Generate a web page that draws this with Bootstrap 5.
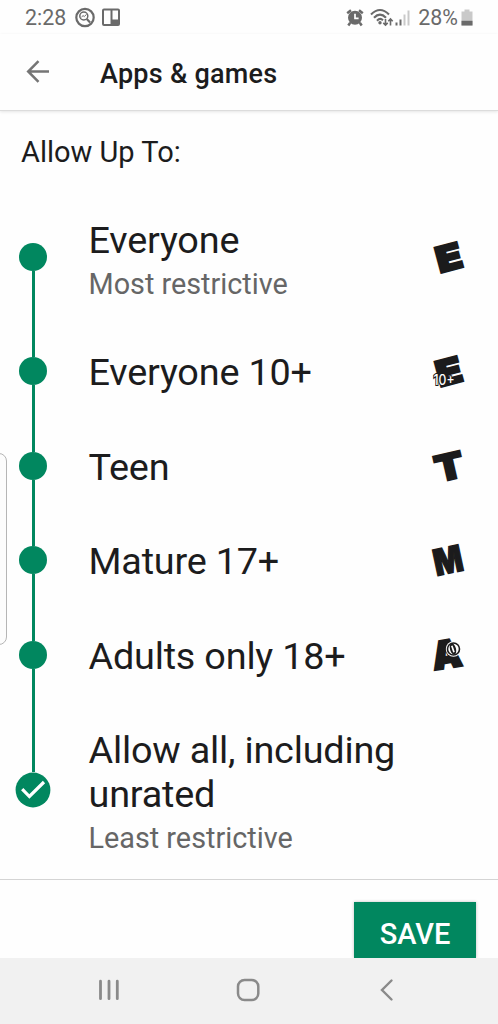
<!DOCTYPE html>
<html lang="en">
<head>
<meta charset="utf-8">
<meta name="viewport" content="width=device-width, initial-scale=1">
<title>Apps &amp; games</title>
<link href="https://cdn.jsdelivr.net/npm/bootstrap@5.3.0/dist/css/bootstrap.min.css" rel="stylesheet">
<style>
  :root { --play: #01875f; --ink: #1c1c1d; }
  body { font-family: Roboto, "Liberation Sans", sans-serif; color: var(--ink); background: #fefefe; }
  svg { display: block; flex: none; overflow: visible; }
  .screen { height: 1024px; }
  .status { height: 34px; padding: 1px 25px 0 25px; color: #6a6a6a; font-size: 21.4px; line-height: 33px; }
  .topbar { height: 77px; padding-left: 26px; border-bottom: 1px solid #dcdcdc; box-shadow: 0 1px 3px rgba(0,0,0,.10); }
  .topbar h1 { font-size: 27px; font-weight: 500; letter-spacing: .25px; line-height: 34px; margin-left: 49px; padding-top: 3px; }
  .lead-in { height: 79px; padding: 24px 0 0 21px; font-size: 29px; line-height: 34px; }
  .level { height: 94.5px; padding: 0 29px 0 15px; }
  .level.first { height: 134px; }
  .level.last { height: 176px; }
  .rail { width: 36px; flex: none; }
  .seg { width: 3px; background: var(--play); }
  .first .seg:first-child, .last .seg:last-child { background: transparent; }
  .dot { width: 28px; height: 28px; background: var(--play); }
  .label { padding: 27.4px 0 0 37.500px; font-size: 37.8px; letter-spacing: -.2px; line-height: 43.8px; }
  .first .label { padding-top: 29px; }
  .hint { font-size: 28.8px; letter-spacing: 0; line-height: 34px; margin-top: 4px; color: #666; }
  .mark-icon text { font-family: Inter, Roboto, sans-serif; font-weight: 900; fill: #1b1b1c; }
  .actions { height: 79px; border-top: 1px solid #d4d4d4; padding: 22px 22px 0 0; }
  .save { width: 122px; height: 56px; background: var(--play); color: #fff; border-radius: 0; font-size: 29px; font-weight: 500; line-height: 34px; padding: 7px 0 0; box-shadow: 0 0 3px rgba(0,0,0,.25); }
  .save:hover { background: var(--play); color: #fff; }
  .sysnav { height: 66px; background: #f1f1f1; padding: 0 104px 3px 97px; }
  .edge-handle { left: -10px; top: 453px; width: 17px; height: 192px; border: 1px solid #b5b5b5; border-radius: 8px; background: #fcfcfc; }
</style>
</head>
<body>
<div class="screen d-flex flex-column position-relative overflow-hidden">
  <div class="status d-flex align-items-center flex-shrink-0">
    <span>2:28</span>
    <svg style="margin-left:8px" width="22" height="22" viewBox="0 0 22 22" fill="none" stroke="#6a6a6a">
      <circle cx="11" cy="10.500" r="8.700" stroke-width="2.200"/><circle cx="9.800" cy="9" r="4" stroke-width="1.500"/>
      <path d="M12.800 12l3.300 3.400" stroke-width="2.200"/><path d="M7.500 10l1.600-1.400 1.200 1 2.200-2.300" stroke-width="1"/>
    </svg>
    <svg style="margin-left:5px" width="20" height="20" viewBox="0 0 20 20">
      <rect x="2" y="1.500" width="16" height="15.500" rx="1" fill="none" stroke="#6a6a6a" stroke-width="2"/>
      <path d="M10.500 2v15" stroke="#6a6a6a" stroke-width="2"/><path d="M10.500 11.500H18V17h-7.500z" fill="#6a6a6a"/>
    </svg>
    <svg class="ms-auto" width="20" height="20" viewBox="0 0 20 20" fill="none" stroke="#6a6a6a">
      <circle cx="10" cy="9.800" r="7" fill="#6a6a6a" stroke="none"/>
      <path d="M2.200 5.300L6 2.300M17.800 5.300L14 2.300M5.200 14.800L3.300 17.500M14.800 14.800l1.900 2.700" stroke-width="2.500"/>
      <path d="M10 5.700v4.700h3.600" stroke="#fff" stroke-width="1.700"/>
    </svg>
    <svg style="margin-left:5px" width="24" height="20" viewBox="0 0 24 20" fill="none" stroke="#6a6a6a" stroke-width="2.100">
      <path d="M1 6.500Q10-2.500 19 6.500M4 9.700Q10 3.500 16 9.700M7 12.700Q10 9.500 13 12.200"/><circle cx="10" cy="14.700" r="1.700" fill="#6a6a6a" stroke="none"/>
      <path d="M15.500 11v6M13.300 14.900l2.200 2.200 2.200-2.200M20.500 17.500v-6.500M18.300 13.200l2.200-2.200 2.200 2.200" stroke-width="1.600"/>
    </svg>
    <svg style="margin-left:1px" width="16" height="18" viewBox="0 0 16 18">
      <path d="M.5 13.500h2v3h-2zM4.500 10.500h2v6h-2z" fill="#6a6a6a"/><path d="M8.500 5.500h2v11h-2zM12.500 1.500h2v15h-2z" fill="#c9c9c9"/>
    </svg>
    <span style="margin-left:7px">28%</span>
    <svg style="margin-left:3px" width="12" height="18" viewBox="0 0 12 18">
      <path d="M3.500 .5h5v2H11.500v14H.5v-14h3z" fill="#c9c9c9"/><path d="M.5 11.800h11v4.700H.5z" fill="#6a6a6a"/>
    </svg>
  </div>

  <header class="topbar d-flex align-items-center flex-shrink-0">
    <svg width="25" height="24" viewBox="0 0 25 24" fill="none" stroke="#757575" stroke-width="2.500"><path d="M23 11.500H2.500M12.500 1.200L2.200 11.500l10.300 10.300"/></svg>
    <h1 class="mb-0">Apps &amp; games</h1>
  </header>

  <div class="lead-in flex-shrink-0">Allow Up To:</div>

  <main class="flex-shrink-0">
    <div class="level first d-flex">
      <div class="rail d-flex flex-column align-items-center"><i class="seg flex-fill"></i><i class="dot rounded-circle"></i><i class="seg flex-fill"></i></div>
      <div class="label flex-fill">Everyone<div class="hint">Most restrictive</div></div>
      <svg class="mark-icon align-self-center" width="40" height="40" viewBox="0 0 40 40"><text x="7" y="33" font-size="35" textLength="25.500" lengthAdjust="spacingAndGlyphs" transform="rotate(-15 20 20)" stroke="#1b1b1c" stroke-width="2.500">E</text></svg>
    </div>
    <div class="level d-flex">
      <div class="rail d-flex flex-column align-items-center"><i class="seg flex-fill"></i><i class="dot rounded-circle"></i><i class="seg flex-fill"></i></div>
      <div class="label flex-fill">Everyone 10+</div>
      <svg class="mark-icon align-self-center" width="40" height="40" viewBox="0 0 40 40"><text x="7" y="33" font-size="35" textLength="25.500" lengthAdjust="spacingAndGlyphs" transform="rotate(-15 20 20)" stroke="#1b1b1c" stroke-width="2.500">E</text>
        <text x="4.500" y="33.800" font-size="14" textLength="21" lengthAdjust="spacingAndGlyphs" style="font-weight:500;fill:#fff;stroke:#1b1b1c;stroke-width:2;paint-order:stroke">10+</text></svg>
    </div>
    <div class="level d-flex">
      <div class="rail d-flex flex-column align-items-center"><i class="seg flex-fill"></i><i class="dot rounded-circle"></i><i class="seg flex-fill"></i></div>
      <div class="label flex-fill">Teen</div>
      <svg class="mark-icon align-self-center" width="40" height="40" viewBox="0 0 40 40"><text x="5.500" y="33.500" font-size="36" textLength="29" lengthAdjust="spacingAndGlyphs" transform="rotate(-13 20 20)" stroke="#1b1b1c" stroke-width="2">T</text></svg>
    </div>
    <div class="level d-flex">
      <div class="rail d-flex flex-column align-items-center"><i class="seg flex-fill"></i><i class="dot rounded-circle"></i><i class="seg flex-fill"></i></div>
      <div class="label flex-fill">Mature 17+</div>
      <svg class="mark-icon align-self-center" width="40" height="40" viewBox="0 0 40 40"><text x="4.500" y="33" font-size="36" textLength="29" lengthAdjust="spacingAndGlyphs" transform="rotate(-12 20 20)" stroke="#1b1b1c" stroke-width="1.500">M</text></svg>
    </div>
    <div class="level d-flex">
      <div class="rail d-flex flex-column align-items-center"><i class="seg flex-fill"></i><i class="dot rounded-circle"></i><i class="seg flex-fill"></i></div>
      <div class="label flex-fill">Adults only 18+</div>
      <svg class="mark-icon align-self-center" width="40" height="40" viewBox="0 0 40 40"><text x="3" y="32.500" font-size="38" textLength="29" lengthAdjust="spacingAndGlyphs" transform="rotate(-9 20 20)" stroke="#1b1b1c" stroke-width="2.500">A</text>
        <circle cx="24.500" cy="14" r="7.700" fill="#fefefe"/><circle cx="24.500" cy="14" r="6" fill="#fefefe" stroke="#1b1b1c" stroke-width="1.600"/><ellipse cx="24" cy="14" rx="3" ry="5.800" fill="#1b1b1c" transform="rotate(-15 24 14)"/><path d="M22.800 10.700l2.200 6.600" stroke="#fefefe" stroke-width="1.700"/></svg>
    </div>
    <div class="level last d-flex">
      <div class="rail d-flex flex-column align-items-center"><i class="seg flex-fill"></i>
        <svg width="36" height="36" viewBox="0 0 36 36"><circle cx="18" cy="18" r="17.400" fill="#01875f"/><path d="M7.200 17.200l7.200 7.300L29 10" fill="none" stroke="#fff" stroke-width="3.200"/></svg>
        <i class="seg flex-fill"></i></div>
      <div class="label flex-fill">Allow all, including<br>unrated<div class="hint">Least restrictive</div></div>
    </div>
  </main>

  <div class="flex-fill"></div>
  <footer class="actions d-flex justify-content-end flex-shrink-0">
    <button class="save btn border-0 d-flex justify-content-center align-items-start"><span class="pt-1 mt-1">SAVE</span></button>
  </footer>
  <nav class="sysnav d-flex align-items-center flex-shrink-0" aria-label="System">
    <svg width="24" height="24" viewBox="0 0 24 24" stroke="#8a8a8a" stroke-width="2.800" stroke-linecap="round"><path d="M3.500 3.200v17.500M12 3.200v17.500M20.300 3.200v17.500"/></svg>
    <svg class="mx-auto" width="24" height="24" viewBox="2 0 24 24" fill="none" stroke="#8a8a8a" stroke-width="2.500"><rect x="2" y="2" width="20.300" height="20" rx="6.500"/></svg>
    <svg width="16" height="24" viewBox="0 0 16 24" fill="none" stroke="#8a8a8a" stroke-width="2.400" stroke-linecap="round"><path d="M13.500 2.500L4 12l9.500 9.500"/></svg>
  </nav>
  <div class="edge-handle position-absolute"></div>
</div>
<script src="https://cdn.jsdelivr.net/npm/bootstrap@5.3.0/dist/js/bootstrap.bundle.min.js"></script>
</body>
</html>
